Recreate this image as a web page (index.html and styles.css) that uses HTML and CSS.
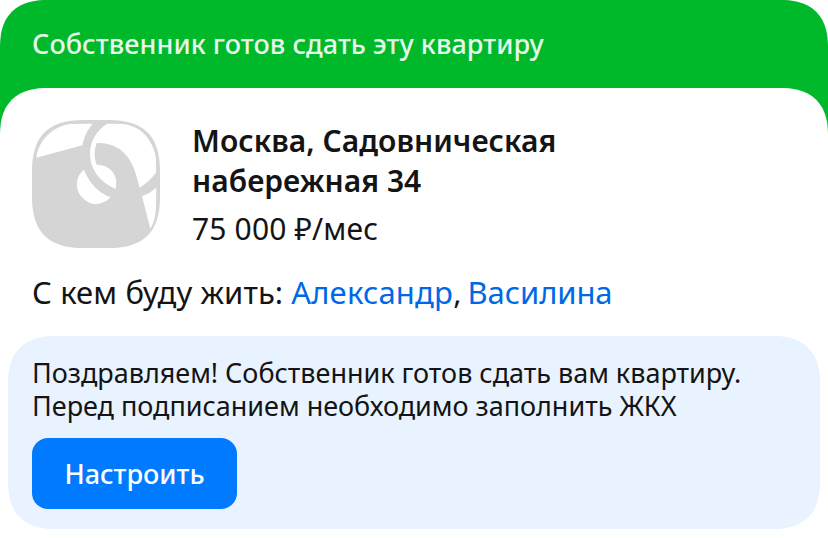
FILE: index.html
```html
<!DOCTYPE html>
<html lang="ru">
<head>
<meta charset="utf-8">
<title>Аренда</title>
<link rel="stylesheet" href="styles.css">
</head>
<body>
<article class="card">
  <header class="status"><span class="status-text">Собственник готов сдать эту квартиру</span></header>
  <main class="content">
    <section class="flat">
      <svg class="photo" viewBox="36 30 384 384" aria-hidden="true">
        <path fill="#d5d5d5" d="M190 30H266C372 30 420 78 420 184V260C420 366 372 414 266 414H190C84 414 36 366 36 260V184C36 78 84 30 190 30Z"/>
        <g fill="#fff">
          <path d="M49 143C55 92 98 48 152 42L218 41Q194 68 187 106Z"/>
          <path d="M262 41L308 42C362 46 401 92 408 146L408 188Q388 215 358 233C350 195 339 158 316 133C293 107 262 98 230 99C222 120 222 145 230 164C263 162 290 188 289 220L287 237C237 215 210 177 210 130C210 95 230 60 262 41Z"/>
          <path d="M192 179C165 200 163 240 190 266C215 290 250 285 272 262C235 248 208 220 192 179Z"/>
          <path d="M366 259Q390 250 409 233L408 290Q407 330 391 356Z"/>
        </g>
      </svg>
      <div class="info">
        <h1 class="address">Москва, Садовническая<br>набережная 34</h1>
        <p class="price">75 000 ₽/мес</p>
      </div>
    </section>
    <p class="roommates"><span class="label">С кем буду жить:</span> <a class="link first">Александр</a><span class="separator">, </span><a class="link second">Василина</a></p>
    <section class="notice">
      <p class="notice-text">Поздравляем! Собственник готов сдать вам квартиру.<br>Перед подписанием необходимо заполнить ЖКХ</p>
      <button class="button" type="button">Настроить</button>
    </section>
  </main>
</article>
</body>
</html>
```
FILE: styles.css
```css
* { box-sizing: border-box; }
body { margin: 0; background: #fff; color: #141414; font-family: "Noto Sans", sans-serif; }
h1, p { margin: 0; }
.card {
  height: 538px;
  overflow: hidden;
  background: linear-gradient(#00b92a 0 160px, #fff 160px);
  border-radius: 48px 48px 0 0;
  corner-shape: superellipse(1.3);
}
.status { height: 88px; padding-left: 32px; font-size: 27px; font-weight: 500; line-height: 87px; letter-spacing: 0.07px; color: #e6f8ea; white-space: nowrap; }
.content { height: 450px; padding: 32px 8px 0; background: #fff; border-radius: 48px 48px 0 0; corner-shape: superellipse(1.3); }
.flat { display: flex; gap: 32px; height: 128px; padding-left: 24px; }
.photo { width: 128px; height: 128px; flex: none; }
.info { padding-top: 1px; white-space: nowrap; }
.address { font-size: 30px; font-weight: 600; line-height: 40px; letter-spacing: 0.03px; }
.price { margin-top: 8px; font-size: 30px; line-height: 40px; letter-spacing: 0.15px; }
.roommates { margin-top: 24px; padding-left: 24px; font-size: 31px; line-height: 40px; white-space: nowrap; }
.label { letter-spacing: 0.12px; }
.link { color: #0068e8; }
.first { letter-spacing: 0.2px; }
.separator { word-spacing: -2px; }
.second { letter-spacing: -0.08px; }
.notice { height: 193px; margin-top: 24px; padding: 20px 24px 0; background: #e8f3ff; border-radius: 48px; corner-shape: superellipse(1.3); }
.notice-text { font-size: 27px; line-height: 33px; letter-spacing: -0.02px; white-space: nowrap; }
.button { display: block; width: 205px; height: 71px; margin-top: 16px; padding: 0 0 1px; border: 0; border-radius: 16px; background: #007aff; color: #fff; font: 500 27px "Noto Sans", sans-serif; }
```
